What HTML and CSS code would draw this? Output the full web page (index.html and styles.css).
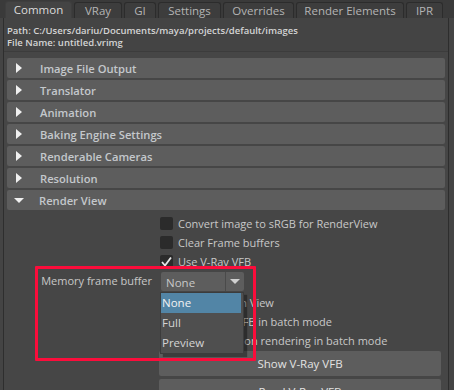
FILE: index.html
```html
<!DOCTYPE html>
<html lang="en">
<head>
    <meta charset="UTF-8">
    <title>Render Settings - Common</title>
    <link rel="stylesheet" href="styles.css">
</head>
<body>
    <div class="tabbar">
        <div class="tab tab-active tab-common">Common</div>
        <div class="tab tab-vray">VRay</div>
        <div class="tab tab-gi">GI</div>
        <div class="tab tab-settings">Settings</div>
        <div class="tab tab-overrides">Overrides</div>
        <div class="tab tab-elements">Render Elements</div>
        <div class="tab tab-ipr">IPR</div>
    </div>

    <div class="panel">
        <div class="file-info">
            <div>Path: C:/Users/dariu/Documents/maya/projects/default/images</div>
            <div>File Name: untitled.vrimg</div>
        </div>

        <div class="scroll-area">
            <div class="frame-header"><span class="arrow-right"></span>Image File Output</div>
            <div class="frame-header"><span class="arrow-right"></span>Translator</div>
            <div class="frame-header"><span class="arrow-right"></span>Animation</div>
            <div class="frame-header"><span class="arrow-right"></span>Baking Engine Settings</div>
            <div class="frame-header"><span class="arrow-right"></span>Renderable Cameras</div>
            <div class="frame-header"><span class="arrow-right"></span>Resolution</div>
            <div class="frame-header"><span class="arrow-down"></span>Render View</div>

            <div class="frame-body">
                <div class="row">
                    <div class="row-label"></div>
                    <div class="check-row"><span class="checkbox"></span>Convert image to sRGB for RenderView</div>
                </div>
                <div class="row">
                    <div class="row-label"></div>
                    <div class="check-row"><span class="checkbox"></span>Clear Frame buffers</div>
                </div>
                <div class="row">
                    <div class="row-label"></div>
                    <div class="check-row">
                        <span class="checkbox">
                            <svg width="13" height="13" viewBox="0 0 13 13"><path d="M2 7 L5 10.5 L11 2.5" fill="none" stroke="#e6e6e6" stroke-width="1.8"/></svg>
                        </span>Use V-Ray VFB
                    </div>
                </div>
                <div class="row row-combo">
                    <div class="row-label">Memory frame buffer</div>
                    <div class="combo">
                        <span class="combo-value">None</span>
                        <span class="combo-arrow"></span>
                        <div class="popup">
                            <div class="popup-item popup-selected">None</div>
                            <div class="popup-item">Full</div>
                            <div class="popup-item">Preview</div>
                        </div>
                    </div>
                </div>
                <div class="row">
                    <div class="row-label"></div>
                    <div class="check-row"><span class="checkbox"></span>Open in Main View</div>
                </div>
                <div class="row">
                    <div class="row-label"></div>
                    <div class="check-row"><span class="checkbox"></span>Hide V-Ray VFB in batch mode</div>
                </div>
                <div class="row">
                    <div class="row-label"></div>
                    <div class="check-row"><span class="checkbox"></span>Close VFB upon rendering in batch mode</div>
                </div>
                <div class="button-row">
                    <div class="button">Show V-Ray VFB</div>
                    <div class="button">Read V-Ray VFB</div>
                </div>
            </div>
        </div>
    </div>

    <div class="highlight-box"></div>
</body>
</html>
```

FILE: styles.css
```css
:root {
    --page-bg: #444444;
    --tabbar-bg: #3a3a3a;
    --header-bg: #5d5d5d;
    --text-color: #c8c8c8;
    --select-color: #5285a6;
}

body, html {
    margin: 0;
    height: 100%;
    overflow: hidden;
    background-color: var(--page-bg);
    font-family: "Open Sans", "Noto Sans", sans-serif;
    color: var(--text-color);
}

/* tabs along the top */
.tabbar {
    display: flex;
    align-items: flex-end;
    gap: 2px;
    height: 18px;
    padding-left: 5px;
    background-color: var(--tabbar-bg);
}

.tab {
    box-sizing: border-box;
    height: 16px;
    border: 1px solid #2c2c2c;
    border-bottom: none;
    border-radius: 3px 3px 0 0;
    background-color: #3d3d3d;
    color: #b4b4b4;
    font-size: 11.5px;
    line-height: 15px;
    text-align: center;
}

.tab-active {
    height: 17px;
    background-color: var(--page-bg);
    color: #dcdcdc;
    border-color: #3e3e3e;
}

.tab-common { width: 67px; }
.tab-vray { width: 48px; }
.tab-gi { width: 32px; }
.tab-settings { width: 63px; }
.tab-overrides { width: 71px; }
.tab-elements { width: 108px; }
.tab-ipr { width: 37px; }

/* main panel */
.panel {
    margin-left: 3px;
    width: 446px;
    height: 372px;
    box-sizing: border-box;
    border-left: 1px solid #2e2e2e;
    border-right: 1px solid #2d2d2d;
    background-color: var(--page-bg);
}

.file-info {
    height: 33px;
    padding: 7px 0 0 3px;
    box-sizing: border-box;
    font-size: 9.5px;
    font-weight: 600;
    line-height: 12px;
    color: #d4d4d4;
}

.scroll-area {
    border-top: 1px solid #3c3c3c;
    background-color: #464646;
    padding: 6px 3px 0 3px;
    height: 340px;
    box-sizing: border-box;
}

.frame-header {
    display: flex;
    align-items: center;
    height: 20px;
    margin-bottom: 2px;
    border-radius: 2px;
    background-color: var(--header-bg);
    font-size: 11.2px;
    font-weight: 600;
    color: #c4c8cc;
}

.arrow-right {
    width: 0;
    height: 0;
    margin: 0 18px 0 9px;
    border-top: 5px solid transparent;
    border-bottom: 5px solid transparent;
    border-left: 6px solid #f0f0f0;
}

.arrow-down {
    width: 0;
    height: 0;
    margin: 0 15px 0 7px;
    border-left: 5px solid transparent;
    border-right: 5px solid transparent;
    border-top: 5px solid #f0f0f0;
}

/* Render View contents */
.frame-body {
    padding-top: 2px;
    font-size: 11px;
}

.row {
    display: flex;
    align-items: center;
    height: 19px;
}

.row-label {
    width: 145px;
    margin-right: 8px;
    text-align: right;
    flex-shrink: 0;
}

.row-combo {
    height: 22px;
    align-items: flex-start;
}

.row-combo .row-label {
    line-height: 20px;
}

.check-row {
    display: flex;
    align-items: center;
    white-space: nowrap;
}

.checkbox {
    display: inline-block;
    width: 13px;
    height: 13px;
    margin-right: 5px;
    border-radius: 2px;
    background-color: #2b2b2b;
}

.checkbox svg {
    display: block;
}

.combo {
    position: relative;
    display: flex;
    margin-top: 1px;
    margin-left: 1px;
    width: 83px;
    height: 19px;
    background-color: var(--header-bg);
    border-radius: 2px;
}

.combo-value {
    flex: 1;
    padding-left: 5px;
    line-height: 21px;
    font-size: 11.5px;
    border-right: 1px solid #4a4a4a;
}

.combo-arrow {
    width: 18px;
    position: relative;
}

.combo-arrow::after {
    content: "";
    position: absolute;
    left: 4px;
    top: 7px;
    border-left: 5px solid transparent;
    border-right: 5px solid transparent;
    border-top: 5px solid #d0d0d0;
}

/* open dropdown list */
.popup {
    position: absolute;
    top: 20px;
    left: -1px;
    width: 84px;
    height: 62px;
    box-sizing: border-box;
    border: 1px solid #3c3c3c;
    background-color: #4f4f4f;
    box-shadow: 3px 3px 1px rgba(0, 0, 0, 0.35);
    z-index: 2;
}

.popup-item {
    height: 20px;
    line-height: 20px;
    padding-left: 1px;
    font-size: 11.5px;
    color: #d4d4d4;
}

.popup-selected {
    background-color: var(--select-color);
    color: #f2f2f2;
    margin-right: 2px;
}

.button-row {
    display: flex;
    flex-direction: column;
    gap: 3px;
    margin: 1px 4px 0 152px;
}

.button {
    height: 25px;
    line-height: 25px;
    border-radius: 2px;
    background-color: var(--header-bg);
    color: #e2e2e2;
    font-size: 11.5px;
    text-align: center;
}

/* red annotation rectangle */
.highlight-box {
    position: absolute;
    left: 35px;
    top: 266px;
    width: 215px;
    height: 89px;
    border: 3px solid #fb0d3b;
    border-radius: 1px;
    z-index: 5;
}
```
